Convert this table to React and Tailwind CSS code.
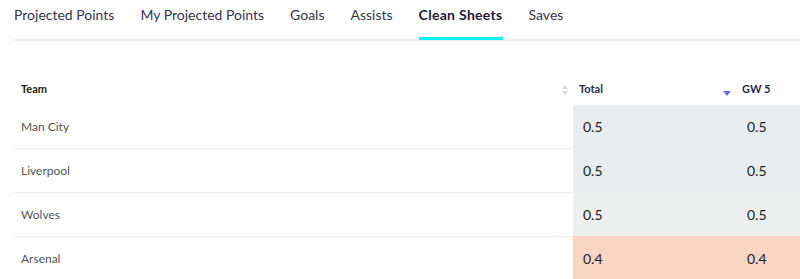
import React from "react";

const TABS = ["Projected Points", "My Projected Points", "Goals", "Assists", "Clean Sheets", "Saves"];

const ROWS = [
  { team: "Man City", total: "0.5", gw: "0.5", bg: "bg-[#e8ecef]" },
  { team: "Liverpool", total: "0.5", gw: "0.5", bg: "bg-[#e8ecef]" },
  { team: "Wolves", total: "0.5", gw: "0.5", bg: "bg-[#eeefef]" },
  { team: "Arsenal", total: "0.4", gw: "0.4", bg: "bg-[#f9d5c2]" },
];

function SortBoth() {
  return (
    <svg width="6" height="10" viewBox="0 0 6 10" className="mr-[5px]">
      <path d="M3 0 L6 4 H0 Z" fill="#d8d8d8" />
      <path d="M3 10 L6 6 H0 Z" fill="#d8d8d8" />
    </svg>
  );
}

function SortDown() {
  return (
    <svg width="8" height="5" viewBox="0 0 8 5" className="mt-[7px] mr-[6px]">
      <path d="M0 0 H8 L4 5 Z" fill="#6b6fe0" />
    </svg>
  );
}

export default function App() {
  return (
    <div className="w-[800px] h-[279px] overflow-hidden bg-white font-['Lato',sans-serif]">
      {/* tabs */}
      <div className="ml-[14px] flex gap-[26px] border-b-2 border-[#eeeeee] h-[41px]">
        {TABS.map((t) => {
          const active = t === "Clean Sheets";
          return (
            <div
              key={t}
              className={`h-[40px] pt-[6px] text-[14px] leading-[18px] ${
                active ? "font-bold text-[#1e1a33] border-b-[3px] border-[#00f4ff] -mb-[1px] tracking-[0.3px]" : "text-[#37334a]"
              }`}
            >
              {t}
            </div>
          );
        })}
      </div>

      {/* table */}
      <div className="mt-[29px] ml-[14px]">
        <div className="flex h-[35px] items-center pt-[4px] text-[11px] font-bold text-[#222]">
          <div className="flex-1 pl-[7px]">Team</div>
          <SortBoth />
          <div className="w-[164px] flex items-center pl-[6px] text-[#2a2a4a]">
            <span className="flex-1">Total</span>
            <SortDown />
          </div>
          <div className="w-[63px] pl-[5px] text-[#2a2a4a]">GW 5</div>
        </div>
        {ROWS.map((r, i) => (
          <div key={r.team} className={`flex ${i === 0 ? "h-[43px]" : "h-[44px]"}`}>
            <div
              className={`flex-1 flex items-center pl-[7px] text-[12px] text-[#555] ${
                i > 0 ? "border-t border-[#eeeeee]" : ""
              }`}
            >
              {r.team}
            </div>
            <div className={`w-[227px] flex items-center text-[14px] text-[#222] ${r.bg}`}>
              <div className="w-[164px] pl-[10px]">{r.total}</div>
              <div className="flex-1 pl-[10px]">{r.gw}</div>
            </div>
          </div>
        ))}
      </div>
    </div>
  );
}
